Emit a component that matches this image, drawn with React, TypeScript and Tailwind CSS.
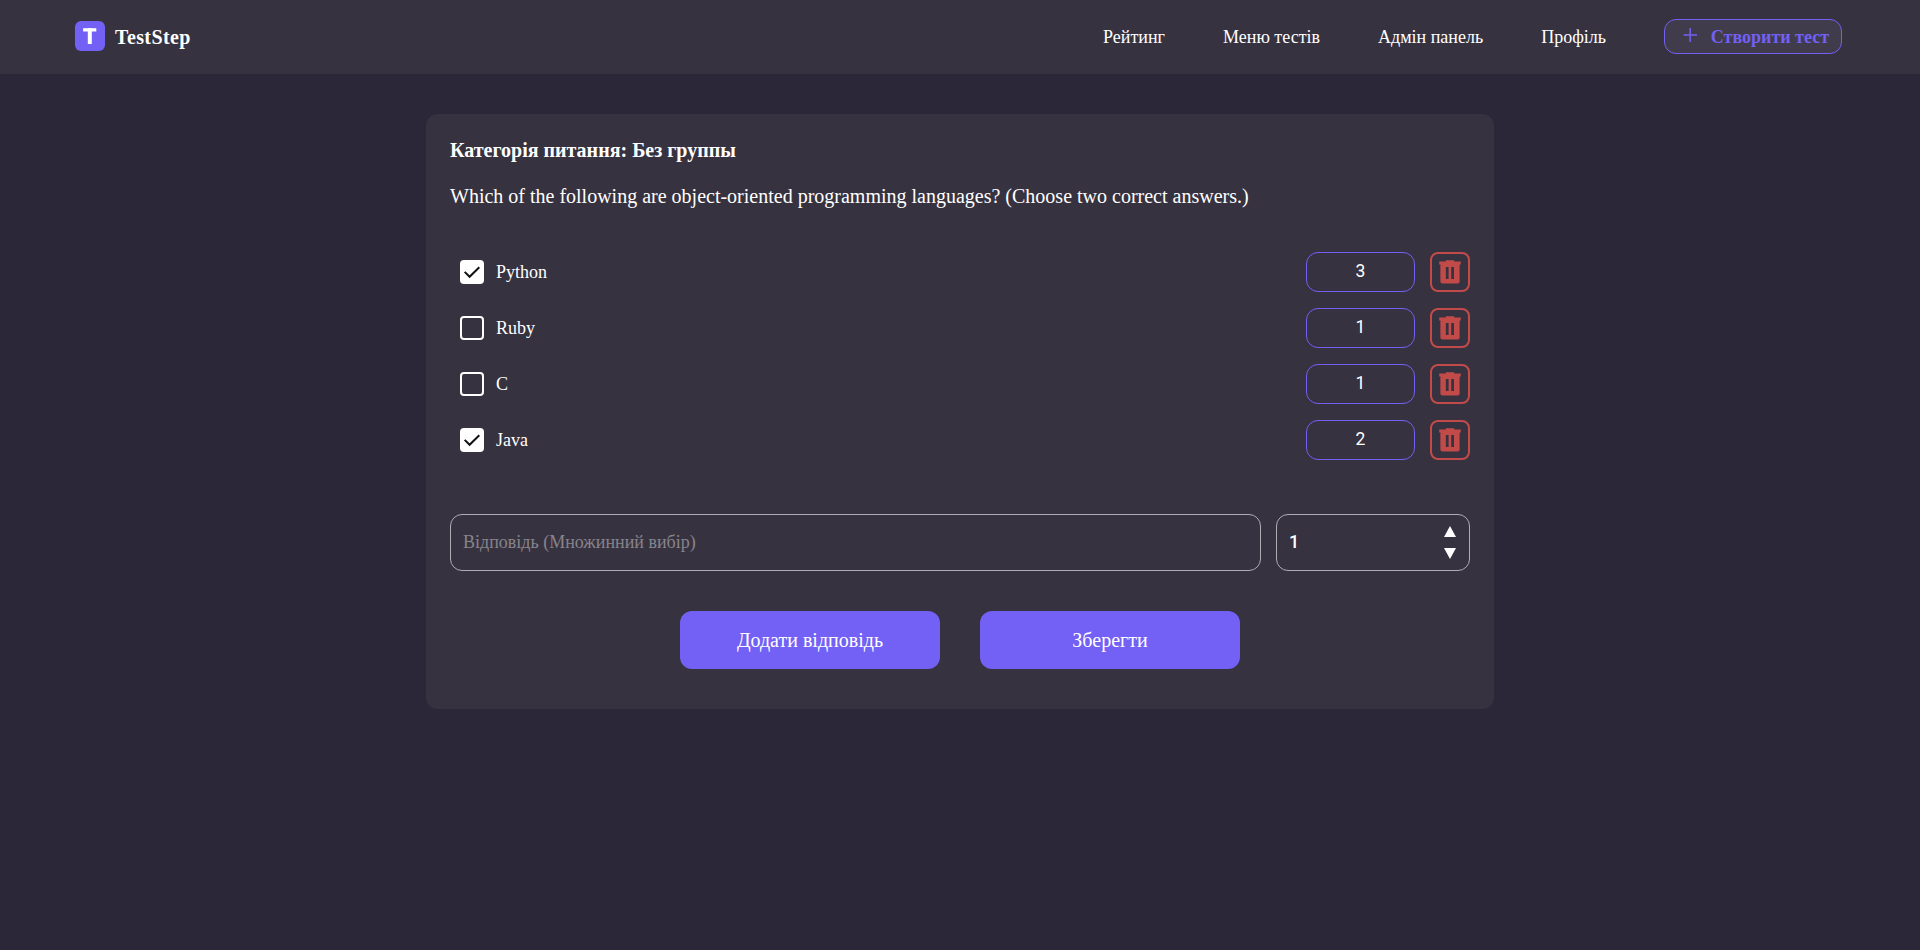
import { useState } from "react";

type Answer = { text: string; points: number; correct: boolean };

const navItems = ["Рейтинг", "Меню тестів", "Адмін панель", "Профіль"];

const initialAnswers: Answer[] = [
  { text: "Python", points: 3, correct: true },
  { text: "Ruby", points: 1, correct: false },
  { text: "C", points: 1, correct: false },
  { text: "Java", points: 2, correct: true },
];

function Logo() {
  return (
    <div className="flex items-center gap-[10px]">
      <div className="flex size-[30px] items-center justify-center rounded-[6px] bg-[#7360f4]">
        <svg width="30" height="30" viewBox="0 0 30 30" fill="#fff">
          <rect x="8.1" y="7.2" width="13.2" height="3.3" />
          <rect x="12.8" y="7.2" width="4" height="15.8" />
        </svg>
      </div>
      <span className="pt-[2px] text-[20px] leading-[22px] font-bold tracking-[0.4px]">TestStep</span>
    </div>
  );
}

function TrashIcon() {
  return (
    <svg width="22" height="24" viewBox="0 0 22 24" fill="#c24b49">
      <path
        fillRule="evenodd"
        d="M6.8 0.3h8.4v1.3h6.6v2.8H20.6v17.2a2 2 0 0 1-2 2H3.4a2 2 0 0 1-2-2V4.4H0.2V1.6H6.8ZM6.8 7v12H9.6V7ZM12.2 7v12h2.8V7Z"
      />
    </svg>
  );
}

function Checkbox({ checked, onToggle }: { checked: boolean; onToggle: () => void }) {
  return (
    <button
      onClick={onToggle}
      className={
        checked
          ? "flex size-6 items-center justify-center rounded-[4px] bg-white"
          : "size-6 rounded-[4px] border-2 border-white"
      }
    >
      {checked && (
        <svg width="24" height="24" viewBox="0 0 24 24" fill="none" stroke="#111" strokeWidth="2">
          <path d="M4.7 11.9 L9.6 16.8 L19.3 7.2" />
        </svg>
      )}
    </button>
  );
}

export default function App() {
  const [answers, setAnswers] = useState(initialAnswers);
  const toggle = (i: number) =>
    setAnswers(answers.map((a, j) => (j === i ? { ...a, correct: !a.correct } : a)));

  return (
    <div className="min-h-screen bg-[#2c2738] font-['Liberation_Serif',serif] text-white">
      <header className="flex h-[74px] items-center justify-between bg-[#373240] pr-[78px] pb-[2px] pl-[75px]">
        <Logo />
        <nav className="flex items-center gap-[58px] pt-px text-[18px] leading-[20px]">
          {navItems.map((item) => (
            <a key={item}>{item}</a>
          ))}
          <button className="flex h-[35px] w-[178px] items-center justify-between rounded-[12px] border border-[#7360f4] bg-[#413c4b] pr-3 pl-[18px] font-bold text-[#7360f4]">
            <svg className="mb-[3px]" width="14" height="14" viewBox="0 0 14 14" stroke="currentColor" strokeWidth="1.5">
              <path d="M7.2 0V14M0.6 7H14" />
            </svg>
            <span>Створити тест</span>
          </button>
        </nav>
      </header>

      <main className="mx-auto mt-10 h-[595px] w-[1068px] rounded-[12px] bg-[#373240] px-6 pt-6">
        <h1 className="text-[20px] leading-[24px] font-bold">Категорія питання: Без группы</h1>
        <p className="mt-[22px] text-[20px] leading-[24px]">
          Which of the following are object-oriented programming languages? (Choose two correct answers.)
        </p>

        <ul className="mt-[44px] flex flex-col gap-4 pl-[10px]">
          {answers.map((a, i) => (
            <li key={a.text} className="flex h-10 items-center">
              <Checkbox checked={a.correct} onToggle={() => toggle(i)} />
              <span className="ml-3 flex-1 text-[18px] leading-5">{a.text}</span>
              <div className="flex h-10 w-[109px] items-center justify-center rounded-[12px] border border-[#7360f4] pb-[2px] font-[Roboto,sans-serif] text-[17.5px] leading-5">
                {a.points}
              </div>
              <button className="ml-[15px] flex size-10 items-center justify-center rounded-[8px] border-2 border-[#c24b49]">
                <TrashIcon />
              </button>
            </li>
          ))}
        </ul>

        <div className="mt-[54px] flex gap-[15px]">
          <input
            placeholder="Відповідь (Множинний вибір)"
            className="h-[57px] w-[811px] rounded-[12px] border border-[#afadb3] px-3 text-[18px] placeholder:text-[#87848c]"
          />
          <div className="flex h-[57px] w-[194px] items-center justify-between rounded-[12px] border border-[#afadb3] pr-[13px] pl-3">
            <span className="pb-px font-[Roboto,sans-serif] text-[18px] leading-5 font-medium">1</span>
            <svg width="12" height="34" viewBox="0 0 12 34" fill="#fff">
              <path d="M6 0L12 11H0ZM0 22H12L6 33Z" />
            </svg>
          </div>
        </div>

        <div className="mt-10 flex justify-center gap-10 text-[20px]">
          <button className="h-[58px] w-[260px] rounded-[12px] bg-[#7360f4]">Додати відповідь</button>
          <button className="h-[58px] w-[260px] rounded-[12px] bg-[#7360f4]">Зберегти</button>
        </div>
      </main>
    </div>
  );
}
